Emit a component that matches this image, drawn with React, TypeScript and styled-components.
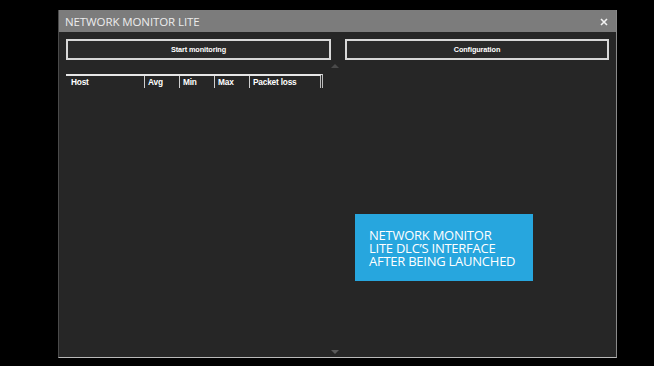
import styled, { createGlobalStyle } from "styled-components";

const GlobalStyle = createGlobalStyle`
  html, body {
    margin: 0;
    padding: 0;
    background: #000000;
    width: 654px;
    height: 366px;
    overflow: hidden;
  }
`;

const Window = styled.div`
  margin: 10px 0 0 58px;
  width: 559px;
  height: 348px;
  box-sizing: border-box;
  border-left: 1px solid #4a4a4a;
  border-right: 1px solid #8a8a8a;
  border-bottom: 1px solid #b8b8b8;
  background: #262626;
  display: flex;
  flex-direction: column;
  font-family: "Open Sans", "Liberation Sans", sans-serif;
`;

const TitleBar = styled.div`
  height: 22px;
  background: #7c7c7c;
  display: flex;
  align-items: center;
  justify-content: space-between;
  padding: 0 8px 0 6px;
  flex-shrink: 0;
`;

const Title = styled.span`
  color: #ececec;
  font-size: 11.5px;
  letter-spacing: -0.1px;
`;

const CloseIcon = styled.svg`
  width: 8px;
  height: 8px;
  margin-top: 1px;
`;

const Body = styled.div`
  flex: 1;
  display: flex;
  flex-direction: column;
  padding: 7px 7px 0 7px;
  min-height: 0;
`;

const ButtonRow = styled.div`
  display: grid;
  grid-template-columns: 265px 264px;
  column-gap: 14px;
`;

const ActionButton = styled.button`
  height: 21px;
  box-sizing: border-box;
  border: 2px solid #d8d8d8;
  background: #2a2a2a;
  color: #ffffff;
  font-family: "Liberation Sans", Arial, sans-serif;
  font-weight: bold;
  font-size: 7.3px;
  letter-spacing: -0.1px;
  padding: 0;
  cursor: pointer;
`;

const Content = styled.div`
  flex: 1;
  display: flex;
  min-height: 0;
`;

const TablePane = styled.div`
  width: 257px;
  padding-top: 14px;
`;

const HeaderRow = styled.div`
  display: grid;
  grid-template-columns: 78px 35px 35px 35px 71px;
  border-top: 2px solid #e6e6e6;
  border-right: 3px double #bdbdbd;
  height: 12px;
`;

const HeaderCell = styled.div<{ $first?: boolean }>`
  color: #ffffff;
  font-family: "Liberation Sans", Arial, sans-serif;
  font-weight: bold;
  font-size: 8.3px;
  letter-spacing: -0.2px;
  line-height: 12px;
  padding-left: ${(p) => (p.$first ? "5px" : "3px")};
  border-left: ${(p) => (p.$first ? "none" : "1px solid #cfcfcf")};
`;

const ScrollTrack = styled.div`
  width: 14px;
  margin-left: 5px;
  display: flex;
  flex-direction: column;
  justify-content: space-between;
  align-items: center;
  padding: 4px 0 3px;
`;

const Arrow = styled.div<{ $down?: boolean }>`
  width: 0;
  height: 0;
  border-left: 4px solid transparent;
  border-right: 4px solid transparent;
  ${(p) =>
    p.$down
      ? "border-top: 4px solid #5a5a5a;"
      : "border-bottom: 4px solid #4a4a4a;"}
`;

const InfoPane = styled.div`
  flex: 1;
  padding: 154px 0 0 13px;
`;

const Callout = styled.div`
  width: 178px;
  height: 67px;
  box-sizing: border-box;
  background: #27a6de;
  color: #ffffff;
  font-family: "Open Sans", "Liberation Sans", sans-serif;
  font-size: 13px;
  line-height: 13px;
  letter-spacing: -0.25px;
  padding: 15px 0 0 14px;
`;

const columns = ["Host", "Avg", "Min", "Max", "Packet loss"];

export default function App() {
  return (
    <>
      <GlobalStyle />
      <Window>
        <TitleBar>
          <Title>NETWORK MONITOR LITE</Title>
          <CloseIcon viewBox="0 0 8 8">
            <path d="M1 1 L7 7 M7 1 L1 7" stroke="#f2f2f2" strokeWidth="1.6" />
          </CloseIcon>
        </TitleBar>
        <Body>
          <ButtonRow>
            <ActionButton>Start monitoring</ActionButton>
            <ActionButton>Configuration</ActionButton>
          </ButtonRow>
          <Content>
            <TablePane>
              <HeaderRow>
                {columns.map((c, i) => (
                  <HeaderCell key={c} $first={i === 0}>
                    {c}
                  </HeaderCell>
                ))}
              </HeaderRow>
            </TablePane>
            <ScrollTrack>
              <Arrow />
              <Arrow $down />
            </ScrollTrack>
            <InfoPane>
              <Callout>
                NETWORK MONITOR
                <br />
                LITE DLC’S INTERFACE
                <br />
                AFTER BEING LAUNCHED
              </Callout>
            </InfoPane>
          </Content>
        </Body>
      </Window>
    </>
  );
}
